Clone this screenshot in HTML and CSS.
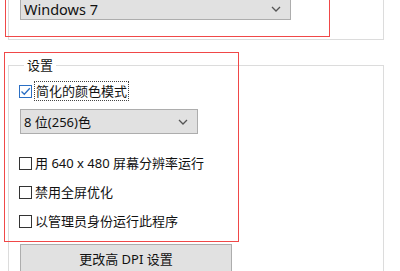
FILE: index.html
```html
<!DOCTYPE html>
<html lang="zh-CN">
<head>
    <meta charset="UTF-8">
    <title>兼容性</title>
    <link rel="stylesheet" href="styles.css">
</head>
<body>
    <div class="page">
        <!-- Compatibility mode (top part cut off) -->
        <div class="group group-mode">
            <div class="select select-wide">
                <span>Windows 7</span>
                <svg class="chevron" width="10" height="6" viewBox="0 0 10 6"><path d="M1 1 L5 5 L9 1" fill="none" stroke="#555" stroke-width="1.3"/></svg>
            </div>
        </div>

        <!-- Settings -->
        <fieldset class="group group-settings">
            <legend>设置</legend>
            <label class="check first">
                <span class="box checked">
                    <svg width="11" height="11" viewBox="0 0 11 11"><path d="M1.5 5.5 L4.3 8.3 L9.8 2.2" fill="none" stroke="#2b6fc4" stroke-width="1.3"/></svg>
                </span>
                <span class="text focus">简化的颜色模式</span>
            </label>
            <div class="select select-small">
                <span>8 位(256)色</span>
                <svg class="chevron" width="10" height="6" viewBox="0 0 10 6"><path d="M1 1 L5 5 L9 1" fill="none" stroke="#555" stroke-width="1.3"/></svg>
            </div>
            <label class="check spaced">
                <span class="box"></span>
                <span class="text">用 640 x 480 屏幕分辨率运行</span>
            </label>
            <label class="check">
                <span class="box"></span>
                <span class="text">禁用全屏优化</span>
            </label>
            <label class="check">
                <span class="box"></span>
                <span class="text">以管理员身份运行此程序</span>
            </label>
            <button class="dpi-btn">更改高 DPI 设置</button>
        </fieldset>

        <!-- red annotation frames -->
        <div class="mark mark-top"></div>
        <div class="mark mark-settings"></div>
    </div>
</body>
</html>
```

FILE: styles.css
```css
body {
    margin: 0;
    background: #ffffff;
    font-family: 'Noto Sans', 'Noto Sans CJK SC', sans-serif;
    font-size: 13px;
    color: #111111;
    overflow: hidden;
}

.page {
    position: relative;
    display: flow-root;
    width: 400px;
    height: 271px;
}

.group {
    width: 374px;
    margin-left: 8px;
    border: 1px solid #dcdcdc;
}

.group-mode {
    margin-top: -9px;
    border-top: none;
    padding: 4px 11px 19px;
    box-sizing: border-box;
    width: 376px;
}

.select {
    display: flex;
    align-items: center;
    justify-content: space-between;
    height: 25px;
    box-sizing: border-box;
    padding: 0 9px 0 3px;
    background: #e1e1e1;
    border: 1px solid #adadad;
    line-height: 16px;
}

.select-wide {
    width: 271px;
    margin-left: 0;
    font-size: 14.5px;
    padding-top: 3px;
}

.select-small {
    width: 178px;
    margin: 8px 0 0 1px;
}

.chevron {
    display: block;
}

.group-settings {
    margin-top: 16px;
    padding: 0 10px 20px;
    box-sizing: border-box;
    width: 376px;
    min-width: 0;
}

legend {
    margin-left: 5px;
    padding: 0 3px;
    line-height: 18px;
}

.check {
    display: flex;
    align-items: center;
    height: 20px;
    margin-top: 9px;
}

.check.first {
    margin-top: 7px;
}

.check.spaced {
    margin-top: 19px;
}

.box {
    width: 13px;
    height: 13px;
    box-sizing: border-box;
    border: 1px solid #333333;
    background: #ffffff;
    display: flex;
    align-items: center;
    justify-content: center;
    margin-right: 3px;
}

.box.checked {
    border-color: #2b6fc4;
}

.text {
    line-height: 18px;
}

.focus {
    outline: 1px dotted #444;
    padding: 0 1px;
}

.dpi-btn {
    display: block;
    width: 212px;
    height: 28px;
    margin: 13px 0 0 1px;
    background: #e1e1e1;
    border: 1px solid #adadad;
    font-family: inherit;
    font-size: 13px;
    color: #111111;
}

.mark {
    position: absolute;
    border: 1px solid #f04848;
    pointer-events: none;
}

.mark-top {
    left: 5px;
    top: -10px;
    width: 323px;
    height: 45px;
}

.mark-settings {
    left: 4px;
    top: 52px;
    width: 233px;
    height: 188px;
}
```
